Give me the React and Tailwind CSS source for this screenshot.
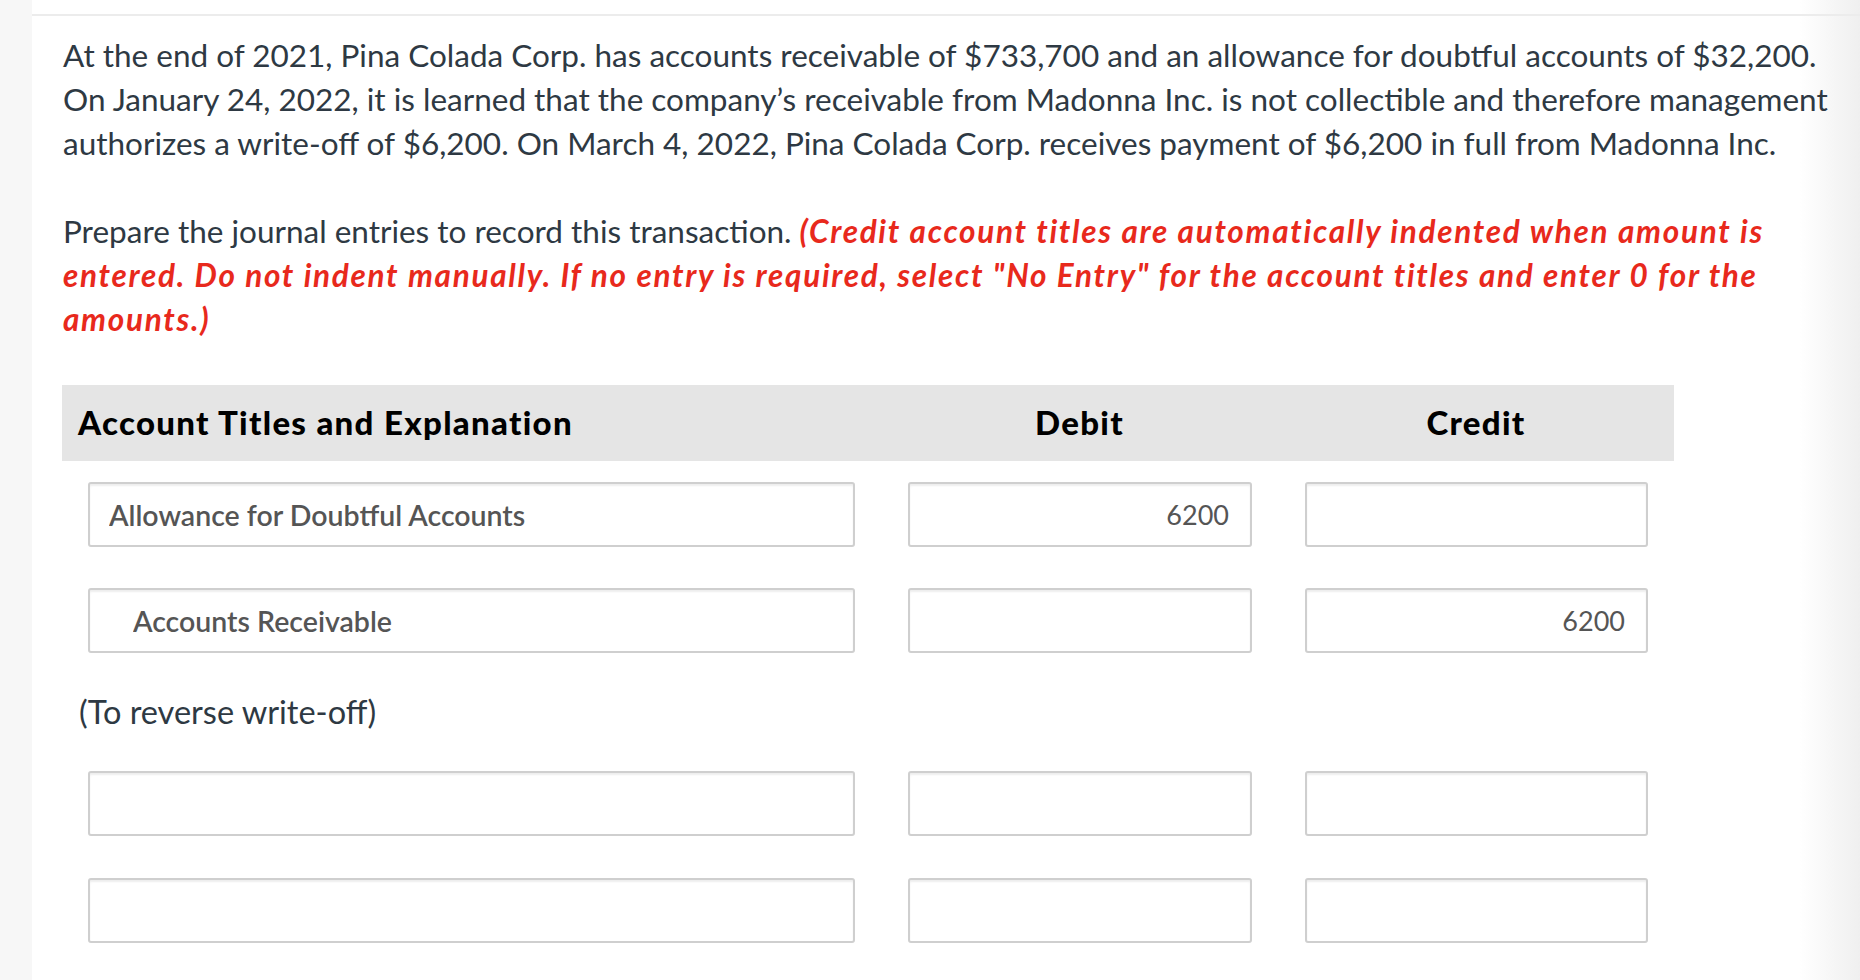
import React from "react";

const rows = [
  { account: "Allowance for Doubtful Accounts", indent: false, debit: "6200", credit: "" },
  { account: "Accounts Receivable", indent: true, debit: "", credit: "6200" },
];

const emptyRows = [1, 2];

function Field({ value = "", align = "left", indent = false, bold = false }) {
  return (
    <input
      readOnly
      value={value}
      className={`h-[65px] w-full rounded-[3px] border-2 border-[#cfcfcf] bg-white text-[#555555] shadow-[inset_0_2px_2px_rgba(0,0,0,0.07)] outline-none font-['Lato',sans-serif] ${
        bold ? "text-[28.5px] font-semibold" : "text-[27px]"
      } ${align === "right" ? "pr-[21px] text-right" : indent ? "pl-[43px]" : "pl-[19px]"}`}
    />
  );
}

function EntryRow({ account, indent, debit, credit }) {
  return (
    <div className="grid grid-cols-[819px_397px_396px]">
      <div className="pl-[26px] pr-[26px]">
        <Field value={account} indent={indent} bold />
      </div>
      <div className="pl-[27px] pr-[26px]">
        <Field value={debit} align="right" />
      </div>
      <div className="pl-[27px] pr-[26px]">
        <Field value={credit} align="right" />
      </div>
    </div>
  );
}

export default function App() {
  return (
    <div className="flex min-h-[980px] w-[1860px] bg-[linear-gradient(to_right,#ffffff_1800px,#efefef)] font-['Lato',sans-serif]">
      {/* left rail */}
      <div className="w-[32px] shrink-0 bg-[#f7f7f7]" />

      <div className="flex-1 pt-[14px]">
        <div className="border-t-2 border-[#ececec] pl-[31px] pt-[17px]">
          {/* question */}
          <div className="whitespace-nowrap text-[31.5px] leading-[44px] text-[#2e3943]">
            <p>At the end of 2021, Pina Colada Corp. has accounts receivable of $733,700 and an allowance for doubtful accounts of $32,200.</p>
            <p>On January 24, 2022, it is learned that the company’s receivable from Madonna Inc. is not collectible and therefore management</p>
            <p>authorizes a write-off of $6,200. On March 4, 2022, Pina Colada Corp. receives payment of $6,200 in full from Madonna Inc.</p>
          </div>

          <div className="mt-[44px] whitespace-nowrap text-[31.5px] leading-[44px] text-[#2e3943]">
            <p>
              Prepare the journal entries to record this transaction.{" "}
              <span className="font-bold italic tracking-[1.7px] text-[#e8291c]">
                (Credit account titles are automatically indented when amount is
              </span>
            </p>
            <p className="font-bold italic tracking-[1.7px] text-[#e8291c]">
              entered. Do not indent manually. If no entry is required, select "No Entry" for the account titles and enter 0 for the
            </p>
            <p className="font-bold italic tracking-[1.7px] text-[#e8291c]">amounts.)</p>
          </div>

          {/* journal table */}
          <div className="mt-[44px] w-[1612px] -ml-px">
            <div className="grid h-[76px] grid-cols-[819px_397px_396px] items-center bg-[#e5e5e5] text-[33px] font-black tracking-[1.3px] text-black">
              <div className="pl-[16px]">Account Titles and Explanation</div>
              <div className="text-center">Debit</div>
              <div className="text-center">Credit</div>
            </div>

            <div className="mt-[21px] flex flex-col gap-[41px]">
              {rows.map((r) => (
                <EntryRow key={r.account} {...r} />
              ))}
            </div>

            <p className="mt-[37px] pl-[17px] text-[32.5px] leading-[44px] text-[#2e3943]">(To reverse write-off)</p>

            <div className="mt-[37px] flex flex-col gap-[42px]">
              {emptyRows.map((n) => (
                <EntryRow key={n} account="" indent={false} debit="" credit="" />
              ))}
            </div>
          </div>
        </div>
      </div>
    </div>
  );
}
